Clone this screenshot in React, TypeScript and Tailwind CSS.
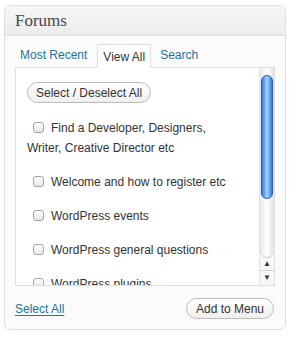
const items = [
  "Find a Developer, Designers, Writer, Creative Director etc",
  "Welcome and how to register etc",
  "WordPress events",
  "WordPress general questions",
  "WordPress plugins",
];

const Checkbox = () => (
  <span className="inline-block align-[-1px] w-[11px] h-[11px] ml-[6px] mr-[7px] rounded-[3px] border border-[#a5a5a5] bg-gradient-to-b from-white to-[#e6e6e6]" />
);

const Scrollbar = () => (
  <div className="w-[15px] flex flex-col border-l border-[#e3e3e3] bg-[#f7f7f7]">
    <div className="flex-1 flex flex-col pt-[7px] px-[1px] rounded-b-full bg-gradient-to-r from-[#e8e8e8] via-white to-[#e2e2e2] border-b border-[#cfcfcf]">
      <div className="h-[124px] rounded-full border border-[#2a5db3] bg-gradient-to-r from-[#3477dc] via-[#a7d3fb] to-[#3477dc]" />
    </div>
    <div className="h-[13px] flex items-center justify-center border-b border-[#d4d4d4] text-[8px] leading-none text-[#333]">
      ▲
    </div>
    <div className="h-[14px] flex items-center justify-center text-[8px] leading-none text-[#333]">
      ▼
    </div>
  </div>
);

const App = () => {
  return (
    <div className="w-[290px] h-[337px] bg-white pt-[5px] pl-[4px] font-['Liberation_Sans',Arial,sans-serif]">
      <div className="w-[282px] h-[325px] rounded-[6px] border border-[#dfdfdf] bg-[#fbfbfb] flex flex-col overflow-hidden">
        <div className="h-[30px] shrink-0 border-b border-[#dfdfdf] bg-gradient-to-b from-[#f7f7f7] to-[#ececec] pl-[10px] flex items-center">
          <h3 className="font-['Liberation_Serif',Georgia,serif] text-[17px] text-[#464646] pt-[1px]">Forums</h3>
        </div>

        <div className="flex items-end gap-[5px] pl-[10px] pt-[7px] h-[31px] shrink-0 text-[12px]">
          <a className="h-[24px] px-[5px] flex items-center text-[#21759b]">Most Recent</a>
          <a className="h-[24px] px-[5px] flex items-center text-[#333] bg-white border border-b-0 border-[#dfdfdf] rounded-t-[3px] relative top-[1px]">View All</a>
          <a className="h-[24px] px-[4px] flex items-center text-[#21759b]">Search</a>
        </div>

        <div className="mx-[10px] h-[219px] shrink-0 border border-[#dfdfdf] bg-white flex overflow-hidden">
          <div className="flex-1 pt-[14px] pl-[11px] pr-[20px] text-[12px] text-[#333] overflow-hidden">
            <button className="h-[21px] px-[8px] rounded-full border border-[#bbb] bg-gradient-to-b from-white to-[#efefef] text-[12px] text-[#333] leading-none">
              Select / Deselect All
            </button>
            <ul className="mt-[15px]">
              {items.map((t) => (
                <li key={t} className="leading-[20px] mb-[14px]">
                  <Checkbox />
                  {t}
                </li>
              ))}
            </ul>
          </div>
          <Scrollbar />
        </div>

        <div className="flex items-center justify-between pl-[10px] pr-[11px] mt-[12px]">
          <a className="text-[12px] text-[#21759b] underline underline-offset-2">Select All</a>
          <button className="h-[21px] px-[9px] rounded-full border border-[#bbb] bg-gradient-to-b from-white to-[#efefef] text-[12px] text-[#333] leading-none">
            Add to Menu
          </button>
        </div>
      </div>
    </div>
  );
};

export default App;
